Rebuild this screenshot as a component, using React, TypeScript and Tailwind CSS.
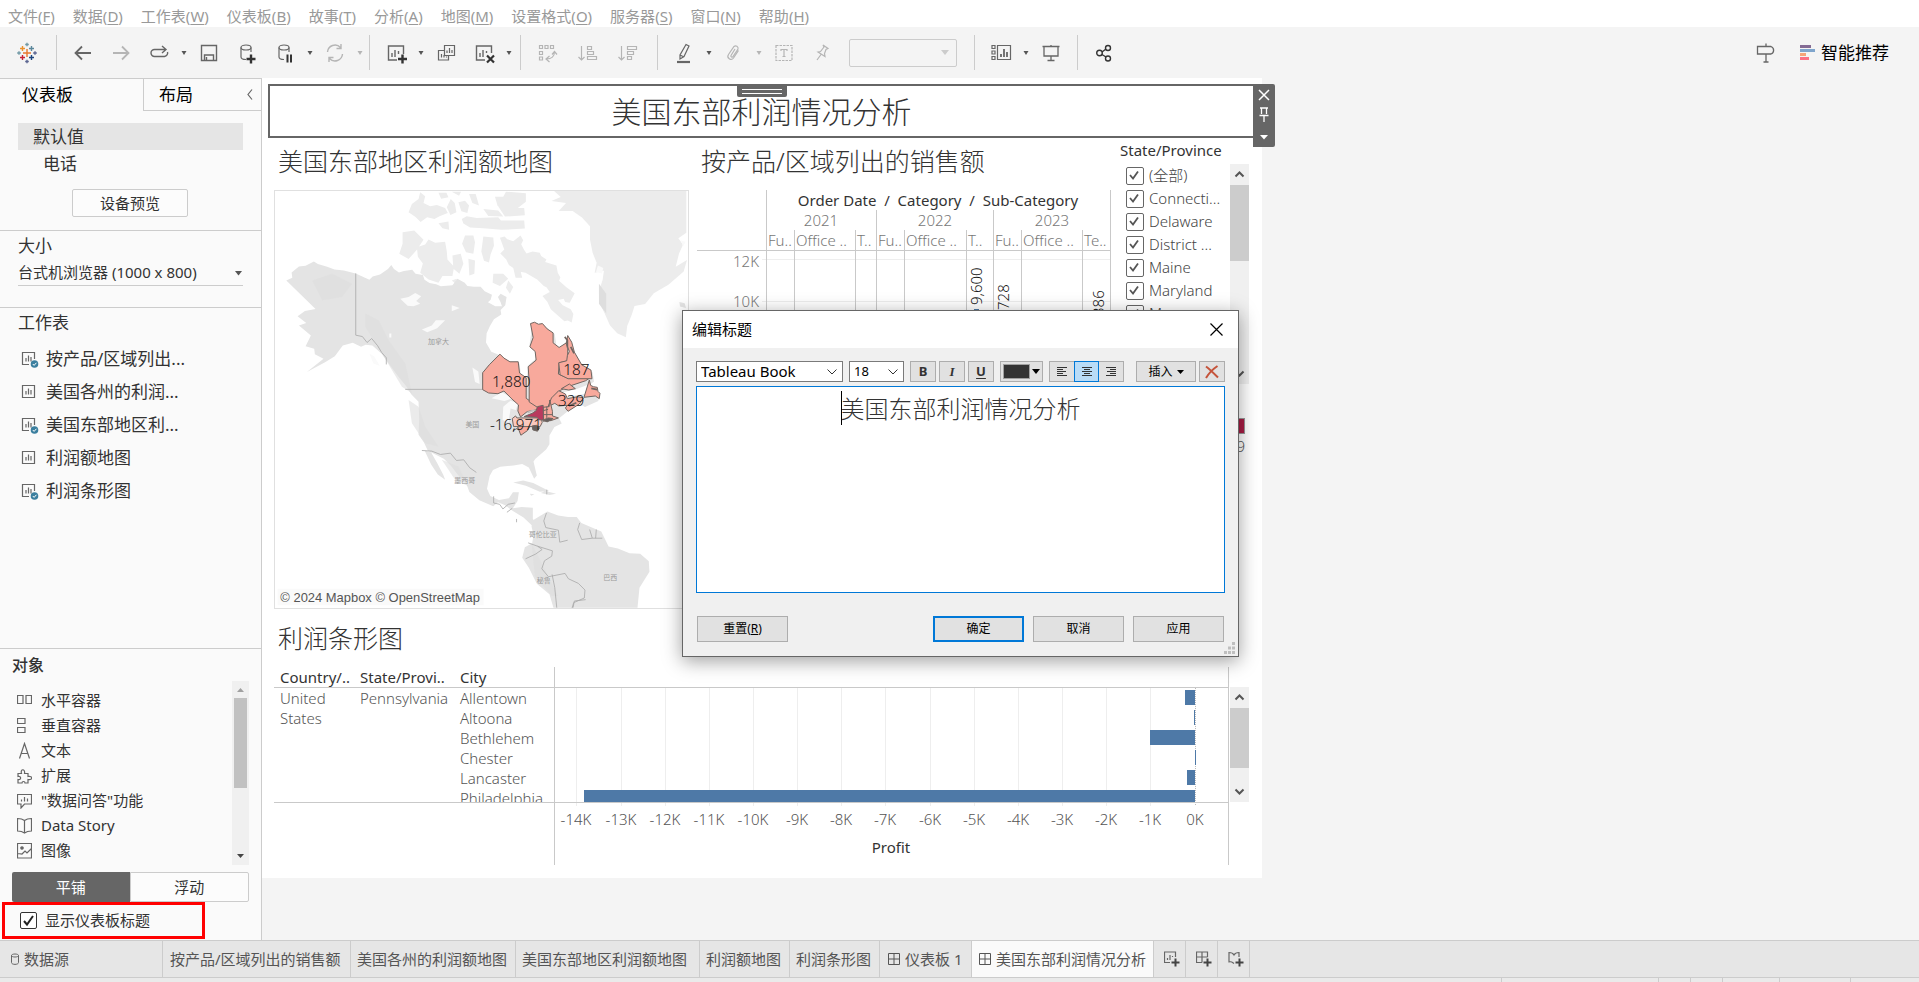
import type { ReactNode } from "react";

const MENU: [string, string][] = [
  ["文件", "F"], ["数据", "D"], ["工作表", "W"], ["仪表板", "B"], ["故事", "T"], ["分析", "A"],
  ["地图", "M"], ["设置格式", "O"], ["服务器", "S"], ["窗口", "N"], ["帮助", "H"],
];

function MenuBar() {
  return (
    <nav className="flex h-[27px] shrink-0 items-center gap-[18px] bg-white px-2 pt-1 text-[15px] leading-[22px] text-[#999]">
      {MENU.map(([label, key]) => (
        <button key={key} type="button" className="whitespace-nowrap">
          {label}(<span className="underline underline-offset-2">{key}</span>)
        </button>
      ))}
    </nav>
  );
}

function Tool({ label, dim, children }: { label: string; dim?: boolean; children: ReactNode }) {
  return (
    <button type="button" aria-label={label} className={dim ? "mx-[7px] shrink-0 text-[#b5b5b5]" : "mx-[7px] shrink-0 text-[#666]"}>
      <svg width="24" height="24" viewBox="0 0 24 24" fill="none" stroke="currentColor" strokeWidth="1.4">
        {children}
      </svg>
    </button>
  );
}

function Caret({ dim }: { dim?: boolean }) {
  return (
    <svg width="12" height="6" viewBox="0 0 12 6" className={dim ? "shrink-0 fill-[#b5b5b5]" : "shrink-0 fill-[#555]"}>
      <path d="M3.500 1h5L6 5z" />
    </svg>
  );
}

function Sep() {
  return <span className="h-[35px] w-px shrink-0 bg-[#ccc]" />;
}

function Plus({ x, y }: { x: number; y: number }) {
  return <path d={`M${x - 4.5} ${y}h9M${x} ${y - 4.5}v9`} stroke="#333" strokeWidth="2.4" />;
}

const LOGO: [number, number, number, string][] = [
  [12, 12, 4, "#e8762d"], [7.5, 7.5, 2.5, "#eb912c"], [16.5, 7.5, 2.5, "#5b879b"], [7.5, 16.5, 2.5, "#c72035"],
  [16.5, 16.5, 2.5, "#1f457e"], [12, 3.5, 1.8, "#7199a6"], [12, 20.5, 1.8, "#5b6591"], [4, 12, 1.8, "#7199a6"], [20, 12, 1.8, "#5b6591"],
];

function Toolbar() {
  return (
    <div className="flex h-[51px] shrink-0 items-center bg-[#f4f4f4] pl-2 pr-[30px]">
      <Tool label="开始">
        {LOGO.map(([x, y, r, c], i) => (
          <path key={i} d={`M${x - r} ${y}h${2 * r}M${x} ${y - r}v${2 * r}`} stroke={c} />
        ))}
      </Tool>
      <div className="w-2.5" />
      <Sep />
      <div className="flex items-center pl-[7px] pr-[3px]">
        <Tool label="撤消"><path d="M4.500 12h15.500M11 5.500l-6.500 6.500 6.500 6.500" strokeWidth="1.800" /></Tool>
        <Tool label="重做" dim><path d="M4 12h15.500M13 5.500l6.500 6.500-6.500 6.500" strokeWidth="1.800" /></Tool>
        <Tool label="重复"><path d="M15 5l4 3.500-4 3.500M19 8.500H7.500a3.500 3.500 0 0 0 0 7h10a3.500 3.500 0 0 0 3-4.500" /></Tool>
        <Caret />
        <Tool label="保存"><path d="M4.500 4.500h15v15h-15zM7.500 19v-5h9v5M9.500 19v-3" /></Tool>
        <Tool label="新建数据源">
          <path d="M6 6.500v9.500c0 1.500 2 2.500 5 2.500M16 6.500V11" strokeWidth="1.200" /><ellipse cx="11" cy="6.500" rx="5" ry="2.500" strokeWidth="1.200" /><Plus x={16} y={18} />
        </Tool>
        <Tool label="暂停自动更新">
          <path d="M6 6.500v9.500c0 1.500 2 2.500 5 2.500M16 6.500V11" strokeWidth="1.200" /><ellipse cx="11" cy="6.500" rx="5" ry="2.500" strokeWidth="1.200" />
          <path d="M14.500 13.500v8M18 13.500v8" stroke="#333" strokeWidth="2" />
        </Tool>
        <Caret />
        <Tool label="运行更新" dim>
          <path d="M4.500 11a7.500 7.500 0 0 1 13-4.500M19.500 13a7.500 7.500 0 0 1-13 4.500M18 3v4.500h-4.500M6 21v-4.500h4.500" />
        </Tool>
        <Caret dim />
      </div>
      <Sep />
      <div className="flex items-center pl-[7px] pr-[5px]">
        <Tool label="新建工作表">
          <path d="M13 19H4.500V5h15v8M8 16v-4M11 16V9M14.500 13v-3" /><Plus x={18.500} y={18} />
        </Tool>
        <Caret />
        <Tool label="复制工作表">
          <path d="M10.500 4.500h10v10h-10zM13 12V9.500M15.500 12V7M18 12V9M10 9.500H4.500V19h10v-4M7.500 16.500V13M10 16.500V14M12.500 16.500v-1" strokeWidth="1.200" />
        </Tool>
        <Tool label="清除工作表">
          <path d="M13 19H4.500V5h15v7M8 16v-4M11 16V9M14.500 12v-2" /><path d="M15 14.500l7 7M22 14.500l-7 7" stroke="#333" strokeWidth="2.200" />
        </Tool>
        <Caret />
      </div>
      <Sep />
      <div className="flex items-center gap-[2px] px-[7px]">
        <Tool label="交换行和列" dim>
          <path d="M4.500 4.500h3v3h-3zM10 4.500h3v3h-3zM15.500 4.500h3v3h-3zM4.500 10.500h3v3h-3zM4.500 16h3v3h-3zM19.500 10.500c0 5-3 7.500-8 7.500M14.500 15l-3.500 3 3.500 3M17 13.500l2.500-3 2.500 3" strokeWidth="1.200" />
        </Tool>
        <Tool label="升序排序" dim><path d="M6.500 5v14M3.500 16l3 3 3-3M12.500 5.500h4v3h-4zM12.500 10.500h6v3h-6zM12.500 15.500h9v3h-9z" strokeWidth="1.200" /></Tool>
        <Tool label="降序排序" dim><path d="M6.500 5v14M3.500 16l3 3 3-3M12.500 5.500h9v3h-9zM12.500 10.500h6v3h-6zM12.500 15.500h4v3h-4z" strokeWidth="1.200" /></Tool>
      </div>
      <div className="w-1" />
      <Sep />
      <div className="flex items-center pl-[7px] pr-[17px]">
        <Tool label="突出显示">
          <path d="M14 3.500l3 1.500-5 10.500-4 2.500V14zM8 14l4 2" strokeWidth="1.200" /><path d="M5 21h13" strokeWidth="2.200" />
        </Tool>
        <Caret />
        <Tool label="组成员" dim>
          <path d="M16.500 9.500l-5 7.500a3 3 0 0 1-5-3.500L12 5.500a2.500 2.500 0 0 1 4 2.500l-5 7.500a1 1 0 0 1-2-1L13 8" strokeWidth="1.200" />
        </Tool>
        <Caret dim />
        <Tool label="显示标记标签" dim><path d="M4 4.500h16v15H4z" strokeDasharray="2.500 1" strokeWidth="1.200" /><path d="M9 10V8.500h6V10M12 8.500v7M10.500 15.500h3" strokeWidth="1.200" /></Tool>
        <Tool label="固定轴" dim><path d="M13 4l5 3.500-2 1-1.500 4 .5 3-7-4.500 2.500-.5L14 6zM11 13.500L7 19" strokeWidth="1.200" /></Tool>
        <select aria-label="适合" disabled className="ml-2 h-7 w-[108px] appearance-none rounded-xs border border-[#ccc] bg-transparent" />
        <svg width="8" height="5" viewBox="0 0 8 5" className="-ml-4 mr-2 fill-[#ccc]"><path d="M0 0h8L4 5z" /></svg>
      </div>
      <Sep />
      <div className="flex items-center px-[7px]">
        <Tool label="显示卡"><path d="M8.500 4.500h13v14h-13zM3 4.500h3v3H3zM3 10h3v3H3zM3 15.500h3v3H3z" strokeWidth="1.200" /><path d="M12 16v-3M15 16V8M18 16v-5" strokeWidth="1.800" /></Tool>
        <Caret />
        <Tool label="演示模式"><path d="M3.500 5.500h17M5 5.500v9.500h14V5.500M12 4v2M12 15v4.500M8.500 19.500h7" strokeWidth="1.300" /></Tool>
      </div>
      <Sep />
      <div className="flex items-center pl-[7px]">
        <Tool label="共享">
          <g stroke="#333"><circle cx="7.500" cy="12" r="2.800" /><circle cx="16" cy="7" r="2.500" /><circle cx="16" cy="17.500" r="2.500" /><path d="M10 11l4-3M10 13.500l4 2.500" /></g>
        </Tool>
      </div>
      <div className="ml-auto flex items-center">
        <svg width="20" height="22" viewBox="0 0 20 22" fill="none" stroke="#666" strokeWidth="1.300">
          <path d="M1.500 4.500H15a4 4 0 0 1 0 7.500H1.500zM10 1.500v3M10 12v8M7.500 20h5" />
        </svg>
        <button type="button" className="ml-6 flex items-center gap-1.5 text-[17px] leading-6 text-black">
          <svg width="15" height="16" viewBox="0 0 15 16">
            <path d="M0 0h11v3H0z" fill="#846b94" /><path d="M0 4h15v3H0z" fill="#7fa5cc" /><path d="M0 8h6v3H0z" fill="#f5a57a" /><path d="M0 12h9v3H0z" fill="#fb7185" />
          </svg>
          智能推荐
        </button>
      </div>
    </div>
  );
}

function SheetIcon({ used }: { used: boolean }) {
  return (
    <svg width="18" height="18" viewBox="0 0 18 18" fill="none" className="shrink-0">
      <path d={used ? "M8 14.500H1.500v-12h12V9" : "M1.500 2.500h12v12h-12z"} stroke="#666" strokeWidth="1.200" />
      <path d="M5 11.500V8M7.500 11.500V5.500M10 11.500V7" stroke="#666" strokeWidth="1.200" />
      {used && <><circle cx="13.500" cy="14" r="3.800" fill="#3b7f9f" /><path d="M11.800 14l1.300 1.400 2.300-2.600" stroke="#fff" /></>}
    </svg>
  );
}

const SHEETS: [string, boolean][] = [
  ["按产品/区域列出...", true], ["美国各州的利润...", false], ["美国东部地区利...", true], ["利润额地图", false], ["利润条形图", true],
];

const OBJECTS: [string, ReactNode][] = [
  ["水平容器", <path d="M.5 3.500h5.500v8H.5zM9 3.500h5.500v8H9z" />],
  ["垂直容器", <path d="M.5 1.500H8v5H.5zM.5 10.500H8v5H.5z" />],
  ["文本", <path d="M2.500 16.500l5-15 5 15M4.500 11.500h6" />],
  ["扩展", <path d="M1 16V12.500c3.500 1 3.500-4 0-3V6.500h3.500c-1.500-5 4-5 3 0H11v3c5-1 5 4 0 3V16H8c0-2-3-2-3 0z" />],
  ["\"数据问答\"功能", <path d="M.5 2.500h14v9.500H7.500L4 16v-4H.5zM4.500 9.500V7.500M7.500 9.500V5M10.500 9.500V6.500" />],
  ["Data Story", <path d="M7.500 3.500C5 1.500 3 1.500.5 1.500v12.500c3 0 5 .5 7 2 2-1.500 4-2 7-2v-12.500c-2.500 0-4.500 0-7 2zv12" />],
  ["图像", <><path d="M.5 1.500h14v14.500H.5zM1 11.500l4 .5 3-3 2 2 4.500-4.500" /><circle cx="5" cy="6" r="1.200" fill="#666" /></>],
];

function Sidebar() {
  return (
    <aside className="flex w-[262px] shrink-0 flex-col border-r border-t border-[#ccc] bg-[#fafafa] text-[15px] text-[#333]">
      <div className="flex h-8 text-[17px] text-black">
        <button type="button" className="w-[143px] pl-[22px] text-left">仪表板</button>
        <button type="button" className="flex flex-1 items-center justify-between border-b border-l border-[#ccc] pl-[15px] pr-2">
          布局
          <svg width="6" height="11" viewBox="0 0 6 11" fill="none" stroke="#666" strokeWidth="1.200"><path d="M5 .5l-4 5 4 5" /></svg>
        </button>
      </div>
      <ul className="mt-3 px-[18px] text-[17px] leading-[27px]">
        <li className="bg-[#e5e5e5] pl-[15px]">默认值</li>
        <li className="pl-[25px]">电话</li>
      </ul>
      <button type="button" className="mb-[13px] ml-[72px] mt-3 h-7 w-[116px] rounded-xs border border-[#ccc] bg-[#fcfcfc]">设备预览</button>
      <div className="border-t border-[#ccc] px-[18px] pb-[21px]">
        <label htmlFor="size" className="block text-[17px] leading-[30px]">大小</label>
        <div className="flex items-center border-b border-[#ccc]">
          <select id="size" className="h-6 flex-1 appearance-none bg-transparent pb-[2px] leading-[22px]">
            <option>台式机浏览器 (1000 x 800)</option>
          </select>
          <svg width="8" height="5" viewBox="0 0 8 5" className="fill-[#555]"><path d="M0 0h7L3.500 4.500z" /></svg>
        </div>
      </div>
      <div className="flex-1 border-t border-[#ccc] text-[17px]">
        <h2 className="pl-[18px] leading-[30px]">工作表</h2>
        <ul className="mt-1 pl-[21px]">
          {SHEETS.map(([name, used]) => (
            <li key={name} className="flex h-[33px] items-center gap-[7px]"><SheetIcon used={used} />{name}</li>
          ))}
        </ul>
      </div>
      <div className="border-t border-[#ccc] pl-3 pr-3">
        <h2 className="text-base font-medium leading-8">对象</h2>
        <div className="flex">
          <ul className="flex-1 pb-[2px] pl-[5px] pt-[7px]">
            {OBJECTS.map(([name, icon]) => (
              <li key={name} className="flex h-[25px] items-center gap-[9px]">
                <svg width="15" height="17" viewBox="0 0 15 17" fill="none" stroke="#666" strokeWidth="1.200">{icon}</svg>
                {name}
              </li>
            ))}
          </ul>
          <div className="flex w-[17px] flex-col items-center bg-[#f0f0f0]">
            <svg width="17" height="17" viewBox="0 0 17 17"><path d="M5 11h7L8.500 7z" fill="#a0a0a0" /></svg>
            <div className="h-[90px] w-[13px] bg-[#c1c1c1]" />
            <svg width="17" height="17" viewBox="0 0 17 17" className="mt-auto"><path d="M5 6h7l-3.500 4z" fill="#444" /></svg>
          </div>
        </div>
        <div className="mt-[7px] flex h-[30px] leading-7">
          <button type="button" className="flex-1 rounded-l-xs bg-[#666] text-white">平铺</button>
          <button type="button" className="flex-1 rounded-r-xs border border-[#ccc] bg-[#fcfcfc]">浮动</button>
        </div>
      </div>
      <label className="mb-px ml-[2px] flex h-[37px] w-[203px] items-center gap-2 border-[3px] border-[#f00] pl-[15px]">
        <span className="relative flex size-[17px]">
          <input type="checkbox" defaultChecked className="size-[17px] appearance-none rounded-xs border border-[#333] bg-white" />
          <svg width="17" height="17" viewBox="0 0 17 17" className="pointer-events-none absolute inset-0" fill="none" stroke="#222" strokeWidth="2"><path d="M4 9l3 3.500 6-8.500" /></svg>
        </span>
        显示仪表板标题
      </label>
    </aside>
  );
}

const ARCTIC =
  "M412 155l35-5 28 28-20 30-25 28-28-16 10-30zM455 200l25-8 10-15 20 10 30-3 5 28 2 25 20 22-5 28-30 0-12 20-30-10-25-20 8-28-15-20zM600 165l25 0 5 20-5 35-22-5-12-25zM655 168l30 3 2 25-10 25-5 25-15-5-8-28zM562 225l25-5 8 30-12 30-18-15zM705 172l14-4 8 8 18 6 22-17 8 14-6 12 8 16 8 12 18-6 22 4 4 10 16 10-4 8 34 10 4 22 8 14-4 10 22 20 25 18-15 28-14-2-4-10-17 4 14 16 24 12 8 14-5 26-12-6-10 2-13-11-28-25-10-22-15-18 22-12-10-14-8-4-20-20-35-20-20-4-18-11-12-8-8-17-18-18 12-12zM430 95l10-25 20-15 5-20 15 12-5 20 20 10 20-4 25 9 8 15-25 10-15 8-22-5-20 14-15-15zM545 80l12-25 12 12 5 28-18 8zM580 65l20-5 12 15-5 22-18-5zM612 40l20 0 10 35-20-8zM590 115l15-8 30 5 65-2 8 10 70 0 2 24-70 4-55-5-40-2-20-12zM690 48l25 0 8-15 60 5 0 25-25 20-30 5-30-12zM520 128l30-5 2 25-20-5zM655 85l45 5 15 18-45-2zM700 78l40 4 38 0 2 22-60 4zM520 36l24 0 6 14-22 4zM560 33l28 0-6 12zM685 280l30 0 15 15-25 22-22-10zM745 262l22 10 5 20-20 0zM610 235l20 5-2 40-15 5zM560 300l15-5 0 18zM730 300l15 20-10 20-12-18z";

const MAINLAND =
  "M62 300l18-8-2-16 22-18 20-2 25-13 12 8 28 8 22 8 28 3 36 9 41 19 10-10 22-6 12-8 12-8 10-12 8 12 15 10 15-4 25-4 10 12 22 4 5 14 15 10 20 4 14 6 35-3 15-20 22 12 8 10 20 2 20 0 12 14 22 10-4 15-8 8 22 12 20 0-4-12-8-16 8-10 18 10-4 25-14 14 2 14-22 14-12 20-10 22-2 28 16 28 26 10 34 23 25 2 4 34 18 14 3-42 24-20-3-26-16-14 8-62 35 0 33 28 5 34 15 10 20-32 14 32 32 55 28 16 4 28-10 6-42 16-40 10-26 28 40-15 52-9 42 8-3 14-40 18-22-12-26 22-30 24 8 16-22 10-15 26 0 26-10 16-32 28-6 8 10 42-8 10-16-34-20-10-26 4-40 4-22 10-10 18-8 38 10 22 26 12 30-5 12-18 18 0-4 26-14 22 26-4 34 2 0 34 20 20 24 4-4 10-40-12-28-26-32-20-25-18-20-8-14 12-42-18-30-25-8-22-25-28-22-28-22-22-48-24-12-26-16-22 2-48-2-52-22-22-15-24-24-30-30-40-20-28-28-25-20-2-14 6-25-12-30 8-24 32-28 18-56 30 50-40-26-14-2-16-26-8 16-32-36-30 22-8-26-20 22-16 32-6zM478 812l20 6 18 32 18 34 6 16-22-16-20-30zM745 908l30-6 30 8 48 24-28 2-42-18zM828 940l14-6 32 8-20 4zM795 942l14 2-10 4z";

const SOUTH =
  "M800 1040l8-20 40-24 32 12 30 4 26 0 14 18 60 26 22 45 28 6 35 14 32 2 26 22 2 32-30 48-6 60H866l-12-40-38-32-24-48-20-30 8-32 22-12 4-24z";

const GREENLAND =
  "M868 31l20 18-28 12 44 6-22 24 42 0 28 20 24 26 0 40 8 40 12 30-6 30 28-6-4 28-10 30 2 42 14 28 16 36 22 24 26 12 4-34 14-34 8-26 32-6 26-32 44-26 46-40 10-34-34 20 10-40 12-26-14-20 24-16V31z";

const BORDERS =
  "M271 279V465l20 4 14 18 14-12 18 22 12 20 14 16 0 20M420 628H653M470 812l30 2 26 10 30-4 18 22 22-2 18 24 20 14M686 950l0 20 18 4 10 14 16-14 20-4M726 998l16-12M755 1018v10M845 1000l-8 24 6 20 38 8 4 36 24-6M945 1030l-6 20 12 30 32-4 30 0M975 1050l8 26M995 1050l-2 26M790 1090l28 10 14 10-20 14-30 14M818 1100l45 14-2 16-22 14-8 24 20 24 10-2 40-8 10 16 30 14 20 20-2 24-32 14-6 20M862 1185l8 40 6 60M925 1285l4-20 34-4M846 930v14";

function ProfitMap() {
  return (
    <svg className="h-auto w-full" viewBox="28 31 1243 1254" role="img" aria-label="美国东部地区利润额地图">
      <g fill="#ececec"><path d={GREENLAND} /><path d={ARCTIC} /></g>
      <path d="M1003 310l22 30 0 60-22-30z" fill="#dedede" />
      <g fill="#e4e4e4"><path d={MAINLAND} /><path d={SOUTH} /></g>
      <g fill="#dddddd" opacity="0.6">
        <path d="M140 300l60-20 60 30-30 40-60 10zM300 400l40 20 30 60 50 70 20 90-30-20-60-100-50-80zM430 660l30 20 20 60 40 60-40-10-40-60zM530 840l50 20 30 60-40-20zM800 1090l30 60 50 100-20 0-50-60z" />
      </g>
      <g fill="#fafafa">
        <path d="M405 355l25-5 20-12 18 10-15 14 12 8-20 8-18-2zM470 448l30-12 12-16 28 0-24 24-30 12zM622 562l18 12 4 38-14-6zM680 655l30-18 34 18-26 8zM715 680l22-18 22 8-6 20-16-4-6 40-18-6z" />
        <path d="M1000 255l16 8-4 16-18-4zM1250 180l14 4-8 14zM312 520l14 8 18 30-20-8zM372 460l6 0 0 12-6 0zM560 375l24 8-24 10z" />
      </g>
      <path d="M1245 365l16 4 4 14-18-4z" fill="#e4e4e4" />
      <path d={BORDERS} fill="none" stroke="#ababab" strokeWidth="2.500" />
      <g fill="#f8a99c" stroke="#6f6560" strokeWidth="3" strokeLinejoin="round">
        <path d="M653 578l20-24 32-32 12 12 18 11 25 0 4 34 20 14 0 62 26 18 17 4-8 12-32 6-20 16-8-18 2-18-20-18-24-24-18 8-28-2-18-10z" />
        <path d="M797 430l12-4 12 6 12-2 14 16 18 12 0 30 18 14 22-14 4 14 0 40-26 6-2 34 28 12 66 0-12 8-54 18-28 14-22 28-8 26-18 4-40-26 0-62-3-44 24-20-3-26-16-14 10-28z" />
        <path d="M905 490l4-24 12 20 8 30 22 38 28 16 3 26-72 0-24-12-4-36 24-6 2-16 6-12z" />
        <path d="M974 600l4 16 8 4 12 2 2 12 6 6-2 16-12-8-34 4z" />
        <path d="M850 680l10-26 22-22 20 10 6 14 32-6 16 4-12 18-34 22-8-10 6-8-26 2-12-8z" />
        <path d="M835 682l18-2 2-20 8 34 0 14 18 6-22 8-24 2z" />
        <path d="M836 692l14-4M836 704h26M846 680v34M890 626l24-14 18 14-20 4z" />
        <path d="M758 740l40-6-10 18-20 14zM744 752l16-8" />
        <path d="M742 716l10-8 4 6 74 0 2 14-6 12-80 0z" fill="#fac8bd" />
        <path d="M778 710l24-10 12-8 4-12 17-4 1 44-12 0-8-8z" fill="#b93a5e" />
        <path d="M802 738l14-2 8 8-6 10-14-4z" fill="#66605e" />
        <path d="M835 720l16-6 14 2-18 10z" fill="#66605e" />
        <path d="M900 470l8 10 0 22M918 500l10 20M980 625l18 4M935 668l-22 10" fill="none" strokeWidth="5" />
      </g>
      <path d="M785 696l22-8 6 4-22 8z" fill="#c0bdbb" />
      <g className="fill-[#9a9a9a] text-[21px]" textAnchor="middle">
        <text x="520" y="491">加拿大</text><text x="622" y="741">美国</text><text x="599" y="909">墨西哥</text>
        <text x="834" y="1073">哥伦比亚</text><text x="837" y="1210">秘鲁</text><text x="1037" y="1202">巴西</text>
      </g>
      <g className="fill-[#111] text-[46px] font-light" textAnchor="middle">
        <text x="739" y="621">1,880</text><text x="935" y="584">187</text><text x="919" y="678">329</text><text x="753" y="750">-16,971</text>
      </g>
      <path d="M36 1228h620v50H36z" fill="#fafafa" />
      <text x="44" y="1269" className="fill-[#555] font-['Liberation_Sans'] text-[39px]">© 2024 Mapbox © OpenStreetMap</text>
    </svg>
  );
}

const CATS: [number, string][] = [
  [70, "Fu.."], [98, "Office .."], [159, "T.."], [180, "Fu.."], [208, "Office .."], [270, "T.."], [297, "Fu.."], [325, "Office .."], [386, "Te.."],
];

function SalesChart() {
  return (
    <svg width="415" height="200" viewBox="0 0 415 200" role="img" aria-label="按产品/区域列出的销售额">
      <path d="M65 69.500h349M65 111.500h349" stroke="#eee" />
      <path d="M69.500 0v200M413.500 0v200M179.500 20v180M296.500 20v180M0 60.500h414" stroke="#c9c9c9" fill="none" />
      {CATS.map(([x]) => <path key={x} d={`M${x - 0.5} 40v160`} stroke="#c9c9c9" />)}
      <text x="241" y="16" textAnchor="middle" className="fill-[#333] text-[15px]">Order Date&nbsp; /&nbsp; Category&nbsp; /&nbsp; Sub-Category</text>
      <g className="fill-[#777] text-[15px] font-light">
        <g textAnchor="middle"><text x="124" y="36">2021</text><text x="238" y="36">2022</text><text x="355" y="36">2023</text></g>
        {CATS.map(([x, t]) => <text key={x} x={x + 1} y="56">{t}</text>)}
        <g textAnchor="end"><text x="62" y="77">12K</text><text x="62" y="117">10K</text></g>
      </g>
      <path d="M277 119h5v81h-5z" fill="#4e79a7" />
      <g className="fill-[#111] text-[15px] font-light">
        <text transform="translate(285 115) rotate(-90)">9,600</text>
        <text transform="translate(312 120) rotate(-90)">728</text>
        <text transform="translate(407 126) rotate(-90)">386</text>
      </g>
    </svg>
  );
}

const STATES = ["(全部)", "Connecti...", "Delaware", "District ...", "Maine", "Maryland", "Massac..."];

function ScrollArrow({ down }: { down?: boolean }) {
  return (
    <svg width="19" height="21" viewBox="0 0 19 21" fill="none" stroke="#555" strokeWidth="2">
      <path d={down ? "M5.500 8.500l4 4 4-4" : "M5.500 12.500l4-4 4 4"} />
    </svg>
  );
}

function StateFilter() {
  return (
    <fieldset className="w-[129px]">
      <legend className="text-[15px] leading-6 text-[#333]">State/Province</legend>
      <div className="mt-[2px] flex justify-between">
        <div className="pl-1.5 text-[15px] font-light text-[#444]">
          {STATES.map((s) => (
            <label key={s} className="flex h-[23px] items-center gap-[5px] whitespace-nowrap">
              <span className="relative flex size-[18px]">
                <input type="checkbox" defaultChecked className="size-[18px] appearance-none rounded-xs border border-[#666] bg-white" />
                <svg width="18" height="18" viewBox="0 0 18 18" className="pointer-events-none absolute inset-0" fill="none" stroke="#555" strokeWidth="1.800"><path d="M4 8l3 3.500 5-7" /></svg>
              </span>
              {s}
            </label>
          ))}
        </div>
        <div className="flex h-[220px] w-[19px] flex-col bg-[#f0f0f0]">
          <ScrollArrow />
          <div className="h-[76px] bg-[#ccc]" />
          <div className="mt-auto"><ScrollArrow down /></div>
        </div>
      </div>
      <div className="mt-[34px] flex flex-col items-end pr-1 text-[15px] font-light text-[#555]">
        <div className="h-4 w-20 border border-[#999] bg-[#a91c44]" />
        <span className="leading-6">9</span>
      </div>
    </fieldset>
  );
}

const CITIES = ["Allentown", "Altoona", "Bethlehem", "Chester", "Lancaster", "Philadelphia"];
const PROFITS = [-225, -20, -1000, 40, -160, -13820];
const TICKS = Array.from({ length: 15 }, (_, i) => i - 14);
const px = (v: number) => Math.round(640.5 + (v * 44.15) / 1000);

function ProfitBars() {
  return (
    <div className="flex">
      <div className="w-[280px] overflow-hidden">
        <table className="w-full table-fixed text-left text-[15px] leading-5">
          <thead>
            <tr className="h-5 border-b border-[#c9c9c9] text-[#333]">
              <th className="w-20 whitespace-nowrap pl-1.5 font-normal">Country/..</th>
              <th className="w-[100px] whitespace-nowrap pl-1.5 font-normal">State/Provi..</th>
              <th className="pl-1.5 font-normal">City</th>
            </tr>
          </thead>
        </table>
        <div className="h-[115px] overflow-hidden border-b border-[#c9c9c9]">
          <table className="w-full table-fixed text-left text-[15px] font-light leading-5 text-[#555]">
            <tbody>
              {CITIES.map((city, i) => (
                <tr key={city} className="h-5">
                  {i === 0 && <td rowSpan={6} className="w-20 pl-1.5 pr-2 align-top">United States</td>}
                  {i === 0 && <td rowSpan={6} className="w-[100px] pl-1.5 align-top">Pennsylvania</td>}
                  <td className="pl-1.5">{city}</td>
                </tr>
              ))}
            </tbody>
          </table>
        </div>
      </div>
      <svg width="675" height="198" viewBox="0 0 675 198" role="img" aria-label="Profit">
        {TICKS.map((t) => <path key={t} d={`M${px(t * 1000) + 0.5} 21v118`} stroke={t === 0 ? "#bbb" : "#eee"} strokeDasharray={t === 0 ? "1 1" : undefined} />)}
        {PROFITS.map((v, i) => (
          <rect key={i} x={Math.min(px(v), px(0))} y={23 + i * 20} width={Math.max(1, Math.abs(px(v) - px(0)))} height={i === 5 ? 12 : 15} fill="#4e79a7" />
        ))}
        <path d="M.5 0v198M674.500 0v198M0 20.500h674M0 135.500h674" stroke="#c9c9c9" />
        <g textAnchor="middle" className="text-[15px]">
          {TICKS.map((t) => <text key={t} x={px(t * 1000)} y="158" className="fill-[#555] font-light">{t}K</text>)}
          <text x="337" y="186" className="fill-[#333]">Profit</text>
        </g>
      </svg>
      <div className="ml-px mt-5 flex h-[115px] w-[19px] flex-col justify-between bg-[#f0f0f0]">
        <div><ScrollArrow /><div className="h-[60px] bg-[#ccc]" /></div>
        <ScrollArrow down />
      </div>
    </div>
  );
}

function Dashboard() {
  return (
    <section className="flex h-[800px] w-[1000px] flex-col bg-white pl-1.5 pt-1.5">
      <div className="relative mr-[7px] flex h-[54px] items-center justify-center border-2 border-[#666]">
        <h1 className="pt-px text-[30px] font-light leading-[50px] text-[#333]">美国东部利润情况分析</h1>
        <svg width="50" height="12" viewBox="0 0 50 12" className="absolute left-1/2 top-[-1px] -ml-[25px]">
          <path d="M0 0h50v10a2 2 0 0 1-2 2H2a2 2 0 0 1-2-2z" fill="#666" /><path d="M5 4.500h40M5 8.500h40" stroke="#fff" />
        </svg>
        <div className="absolute -right-[22px] -top-[2px] flex h-[63px] w-[22px] flex-col items-center justify-between rounded-r-xs bg-[#666] py-[5px]">
          <button type="button" aria-label="关闭" className="leading-none"><svg width="12" height="12" viewBox="0 0 12 12" stroke="#fff" strokeWidth="1.500"><path d="M1 1l10 10M11 1L1 11" /></svg></button>
          <button type="button" aria-label="固定" className="-mt-1.5 leading-none"><svg width="10" height="15" viewBox="0 0 10 15" fill="none" stroke="#fff" strokeWidth="1.300"><path d="M1 1h8M2.500 1v6M7.500 1v6M.5 8.500h9M5 8.500V15" /></svg></button>
          <button type="button" aria-label="更多选项" className="leading-none"><svg width="8" height="8" viewBox="0 0 8 8" fill="#fff"><path d="M0 1h8L4 5.500z" /></svg></button>
        </div>
      </div>
      <div className="flex h-[470px] gap-2 pl-1.5">
        <div className="w-[415px]">
          <h2 className="pl-1 text-[25px] font-light leading-[46px] text-[#333]">美国东部地区利润额地图</h2>
          <div className="mt-1.5 border border-[#e0e0e0]"><ProfitMap /></div>
        </div>
        <div className="w-[415px]">
          <h2 className="pl-1 text-[25px] font-light leading-[46px] text-[#333]">按产品/区域列出的销售额</h2>
          <div className="mt-1.5"><SalesChart /></div>
        </div>
        <StateFilter />
      </div>
      <div className="pl-1.5">
        <h2 className="mb-[5px] pl-1 pt-1.5 text-[25px] font-light leading-[48px] text-[#333]">利润条形图</h2>
        <ProfitBars />
      </div>
    </section>
  );
}

function AlignIcon({ d }: { d: string }) {
  return <svg width="12" height="12" viewBox="0 0 12 12" stroke="#333" fill="none"><path d={d} /></svg>;
}

function Chevron() {
  return (
    <svg width="10" height="6" viewBox="0 0 10 6" className="pointer-events-none absolute right-1.5 top-2" fill="none" stroke="#333"><path d="M.5 .5L5 5l4.500-4.500" /></svg>
  );
}

function TitleDialog() {
  return (
    <div role="dialog" aria-label="编辑标题" className="absolute left-[682px] top-[310px] w-[557px] border border-[#666] bg-[#f0f0f0] text-black shadow-[0_4px_18px_rgba(0,0,0,0.38)]">
      <div className="flex h-[37px] items-center justify-between bg-white pl-[9px] pr-[15px] text-[15px]">
        编辑标题
        <button type="button" aria-label="关闭"><svg width="13" height="13" viewBox="0 0 13 13" stroke="#000" strokeWidth="1.200"><path d="M.5 .5l12 12M12.500 .5l-12 12" /></svg></button>
      </div>
      <div className="px-[13px] pb-[14px] pt-[13px]">
        <div className="flex h-[21px] items-stretch">
          <div className="relative flex w-[147px]">
            <select aria-label="字体" className="h-[21px] w-full appearance-none border border-[#7a7a7a] bg-white pl-1 text-[15px] leading-[19px]"><option>Tableau Book</option></select>
            <Chevron />
          </div>
          <div className="relative ml-1.5 flex w-[55px]">
            <select aria-label="字号" className="h-[21px] w-full appearance-none border border-[#7a7a7a] bg-white pl-1 text-[13px] leading-[19px]"><option>18</option></select>
            <Chevron />
          </div>
          <div className="ml-1.5 flex gap-[3px] text-[13px] leading-[19px] text-[#333]">
            <button type="button" className="w-[26px] border border-[#adadad] bg-[#e1e1e1] font-bold">B</button>
            <button type="button" className="w-[26px] border border-[#adadad] bg-[#e1e1e1] font-['Liberation_Serif'] font-bold italic">I</button>
            <button type="button" className="w-[26px] border border-[#adadad] bg-[#e1e1e1] font-bold underline underline-offset-2">U</button>
          </div>
          <button type="button" aria-label="文字颜色" className="ml-1.5 flex w-[43px] items-center justify-between border border-[#adadad] bg-[#e1e1e1] px-[2px]">
            <span className="h-[15px] w-[27px] border border-[#a0a0a0] bg-[#333]" />
            <svg width="8" height="5" viewBox="0 0 8 5"><path d="M0 0h8L4 5z" /></svg>
          </button>
          <div className="ml-1.5 flex">
            <button type="button" aria-label="左对齐" className="flex w-[25px] items-center justify-center border border-r-0 border-[#adadad] bg-[#e1e1e1]"><AlignIcon d="M1 1.500h10M1 3.500h6M1 5.500h9M1 7.500h6M1 9.500h10" /></button>
            <button type="button" aria-label="居中" className="flex w-[25px] items-center justify-center border border-[#0078d7] bg-[#b9dcf7]"><AlignIcon d="M1 1.500h10M3 3.500h6M1 5.500h10M3 7.500h6M1 9.500h10" /></button>
            <button type="button" aria-label="右对齐" className="flex w-[25px] items-center justify-center border border-l-0 border-[#adadad] bg-[#e1e1e1]"><AlignIcon d="M1 1.500h10M5 3.500h6M2 5.500h9M5 7.500h6M1 9.500h10" /></button>
          </div>
          <button type="button" className="ml-auto flex w-[60px] items-center justify-center gap-1 border border-[#adadad] bg-[#e1e1e1] text-[12px]">
            插入<svg width="7" height="4" viewBox="0 0 7 4"><path d="M0 0h7L3.500 4z" /></svg>
          </button>
          <button type="button" aria-label="清除" className="ml-[3px] flex w-[26px] items-center justify-center border border-[#adadad] bg-[#e1e1e1]">
            <svg width="14" height="14" viewBox="0 0 14 14" stroke="#c5533a" strokeWidth="2" fill="none"><path d="M1 1.500c4 3 8 7 12 11M12.500 1C8 4 4 8 1 13" /></svg>
          </button>
        </div>
        <div className="relative mt-1">
          <textarea aria-label="标题文本" rows={1} defaultValue="美国东部利润情况分析" className="block h-[207px] w-full resize-none border border-[#0078d7] bg-white pt-1 text-center text-[24px] font-light leading-9 text-[#333] outline-none" />
          <span className="absolute left-1/2 top-[5px] -ml-[120px] h-[34px] w-px bg-black" />
        </div>
        <div className="mt-[23px] flex h-[26px] gap-[9px] px-px text-[12px]">
          <button type="button" className="mr-auto w-[91px] border border-[#adadad] bg-[#e1e1e1]">重置(<span className="underline">R</span>)</button>
          <button type="button" className="w-[91px] border-2 border-[#0078d7] bg-[#e1e1e1]">确定</button>
          <button type="button" className="w-[91px] border border-[#adadad] bg-[#e1e1e1]">取消</button>
          <button type="button" className="w-[91px] border border-[#adadad] bg-[#e1e1e1]">应用</button>
        </div>
      </div>
      <svg width="11" height="12" viewBox="0 0 11 12" className="absolute bottom-[2px] right-[3px] fill-[#bfbfbf]">
        <path d="M8 0h3v3H8zM8 4.500h3v3H8zM8 9h3v3H8zM4 4.500h3v3H4zM4 9h3v3H4zM0 9h3v3H0z" />
      </svg>
    </div>
  );
}

function GridIcon() {
  return <svg width="12" height="12" viewBox="0 0 12 12" fill="none" stroke="#555"><path d="M.5 .5h11v11H.5zM.5 6h11M6 .5v11" /></svg>;
}

function NewIcon({ d }: { d: string }) {
  return (
    <svg width="16" height="16" viewBox="0 0 16 16" fill="none" stroke="#666" strokeWidth="1.200"><path d={d} /><path d="M7.500 11.500h8M11.500 7.500v8" stroke="#444" strokeWidth="2" /></svg>
  );
}

const NEW_TABS: [string, string][] = [
  ["新建工作表", "M6 11.500H.5V1h11v5M3.500 9V7M6 9V4M8.500 6V5"],
  ["新建仪表板", "M6 11.500H.5V1h11v5M.5 6h11M6 1v10.500"],
  ["新建故事", "M6 12.500C4.500 11 3 10.500 1 10.500V1.500c2.500 0 4 .5 5 2.500 1-2 2.500-2.500 5-2.500V6M1 10.500v1"],
];

function TabBar() {
  const tab = "flex shrink-0 items-center gap-[5px] whitespace-nowrap border-r border-[#ccc]";
  return (
    <div className="flex h-[38px] shrink-0 border-y border-[#ccc] bg-[#e6e6e6] text-[15px] text-[#555]">
      <button type="button" className={`${tab} w-[163px] pl-[11px]`}>
        <svg width="8" height="12" viewBox="0 0 8 12" fill="none" stroke="#666"><path d="M.5 2.500v7c0 2.500 7 2.500 7 0v-7M.5 2.500c0 2 7 2 7 0s-7-2-7 0" /></svg>
        数据源
      </button>
      <button type="button" className={`${tab} w-[188px] pl-[7px]`}>按产品/区域列出的销售额</button>
      <button type="button" className={`${tab} w-[165px] pl-1.5`}>美国各州的利润额地图</button>
      <button type="button" className={`${tab} w-[184px] pl-1.5`}>美国东部地区利润额地图</button>
      <button type="button" className={`${tab} w-[90px] pl-1.5`}>利润额地图</button>
      <button type="button" className={`${tab} w-[90px] pl-1.5`}>利润条形图</button>
      <button type="button" className={`${tab} w-[92px] pl-2`}><GridIcon />仪表板 1</button>
      <button type="button" className={`${tab} w-[182px] bg-[#fafafa] pl-[7px]`}><GridIcon />美国东部利润情况分析</button>
      {NEW_TABS.map(([label, d]) => (
        <button key={label} type="button" aria-label={label} className={`${tab} w-8 justify-center pl-1`}><NewIcon d={d} /></button>
      ))}
    </div>
  );
}

function StatusBar() {
  return (
    <div className="flex h-1 shrink-0 justify-end bg-[#eaeaea]">
      <span className="w-[157px] border-l border-[#ccc]" />
      <span className="w-8 border-l border-[#ccc]" />
      <span className="w-8 border-l border-[#ccc]" />
      <span className="w-[57px] border-l border-[#ccc]" />
      <span className="w-[71px] border-l border-[#ccc]" />
      <span className="w-[69px] border-l border-[#ccc]" />
    </div>
  );
}

export default function App() {
  return (
    <div className="relative flex min-h-screen flex-col bg-[#f4f4f4] font-['Noto_Sans','Noto_Sans_CJK_SC',sans-serif]">
      <MenuBar />
      <Toolbar />
      <div className="flex flex-1">
        <Sidebar />
        <main className="min-w-0 flex-1"><Dashboard /></main>
      </div>
      <TabBar />
      <StatusBar />
      <TitleDialog />
    </div>
  );
}
